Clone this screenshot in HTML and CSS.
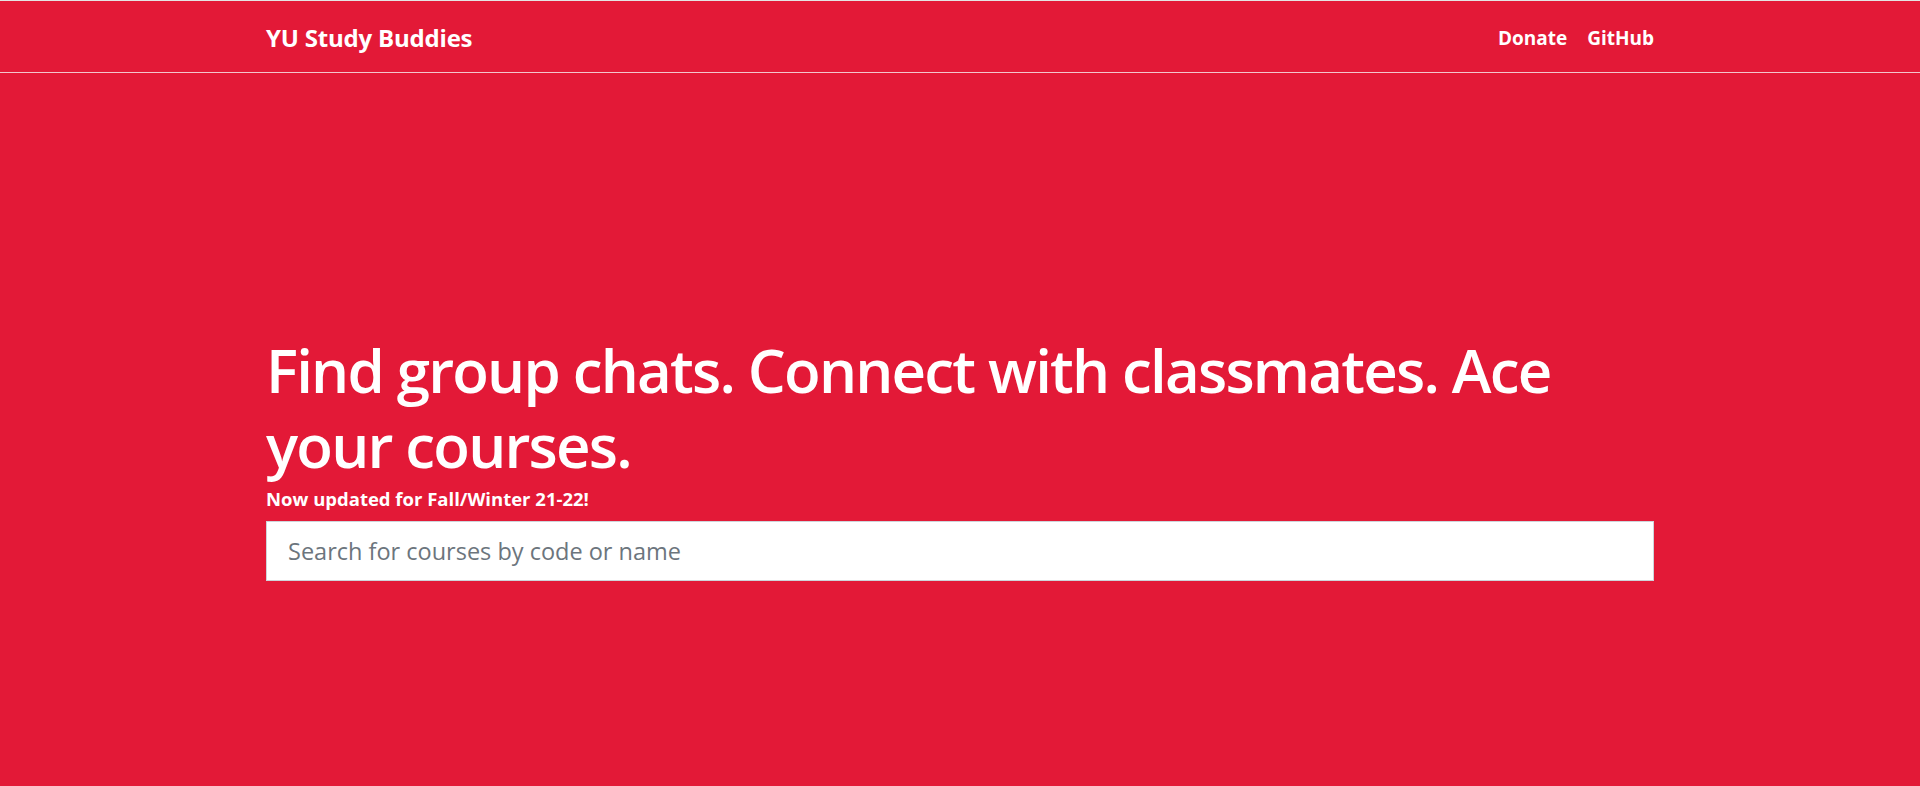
FILE: index.html
```html
<!DOCTYPE html>
<html lang="en">
<head>
<meta charset="utf-8">
<title>YU Study Buddies</title>
<link rel="stylesheet" href="styles.css">
</head>
<body>
<header class="navbar">
  <div class="container nav-inner">
    <a class="brand" href="#">YU Study Buddies</a>
    <nav class="links">
      <a href="#">Donate</a>
      <a href="#">GitHub</a>
    </nav>
  </div>
</header>
<main class="hero">
  <div class="container">
    <h1 class="headline">Find group chats. Connect with classmates. Ace your courses.</h1>
    <p class="sub">Now updated for Fall/Winter 21-22!</p>
    <input class="search" type="text" placeholder="Search for courses by code or name">
  </div>
</main>
</body>
</html>
```
FILE: styles.css
```css
html, body {
  margin: 0;
  padding: 0;
  height: 100%;
}
body {
  background: #e31937;
  border-top: 1px solid #e4e4e4;
  font-family: "Open Sans", "Noto Sans", sans-serif;
  color: #fff;
  box-sizing: border-box;
}
.container {
  width: 1388px;
  margin: 0 auto;
}
.navbar {
  height: 71px;
  border-bottom: 1px solid #f3c6cd;
}
.nav-inner {
  box-sizing: border-box;
  height: 100%;
  padding-top: 2px;
  display: flex;
  align-items: center;
  justify-content: space-between;
}
.brand {
  color: #fff;
  text-decoration: none;
  font-weight: 700;
  font-size: 24px;
  letter-spacing: -0.2px;
}
.links {
  display: flex;
  gap: 20px;
}
.links a {
  color: #fff;
  text-decoration: none;
  font-weight: 700;
  font-size: 19px;
}
.hero {
  padding-top: 260px;
}
.headline {
  margin: 0;
  font-size: 60px;
  line-height: 75px;
  font-weight: 600;
  letter-spacing: -1.8px;
}
.sub {
  margin: 3px 0 0;
  font-size: 18.5px;
  font-weight: 700;
  line-height: 26px;
}
.search {
  display: block;
  box-sizing: border-box;
  width: 100%;
  height: 60px;
  margin-top: 9px;
  padding: 0 21px;
  border: 1px solid #ced4da;
  border-radius: 0;
  background: #fff;
  font-family: "Open Sans", "Noto Sans", sans-serif;
  font-size: 23.5px;
  color: #495057;
  outline: none;
}
.search::placeholder {
  color: #6c757d;
}
```
